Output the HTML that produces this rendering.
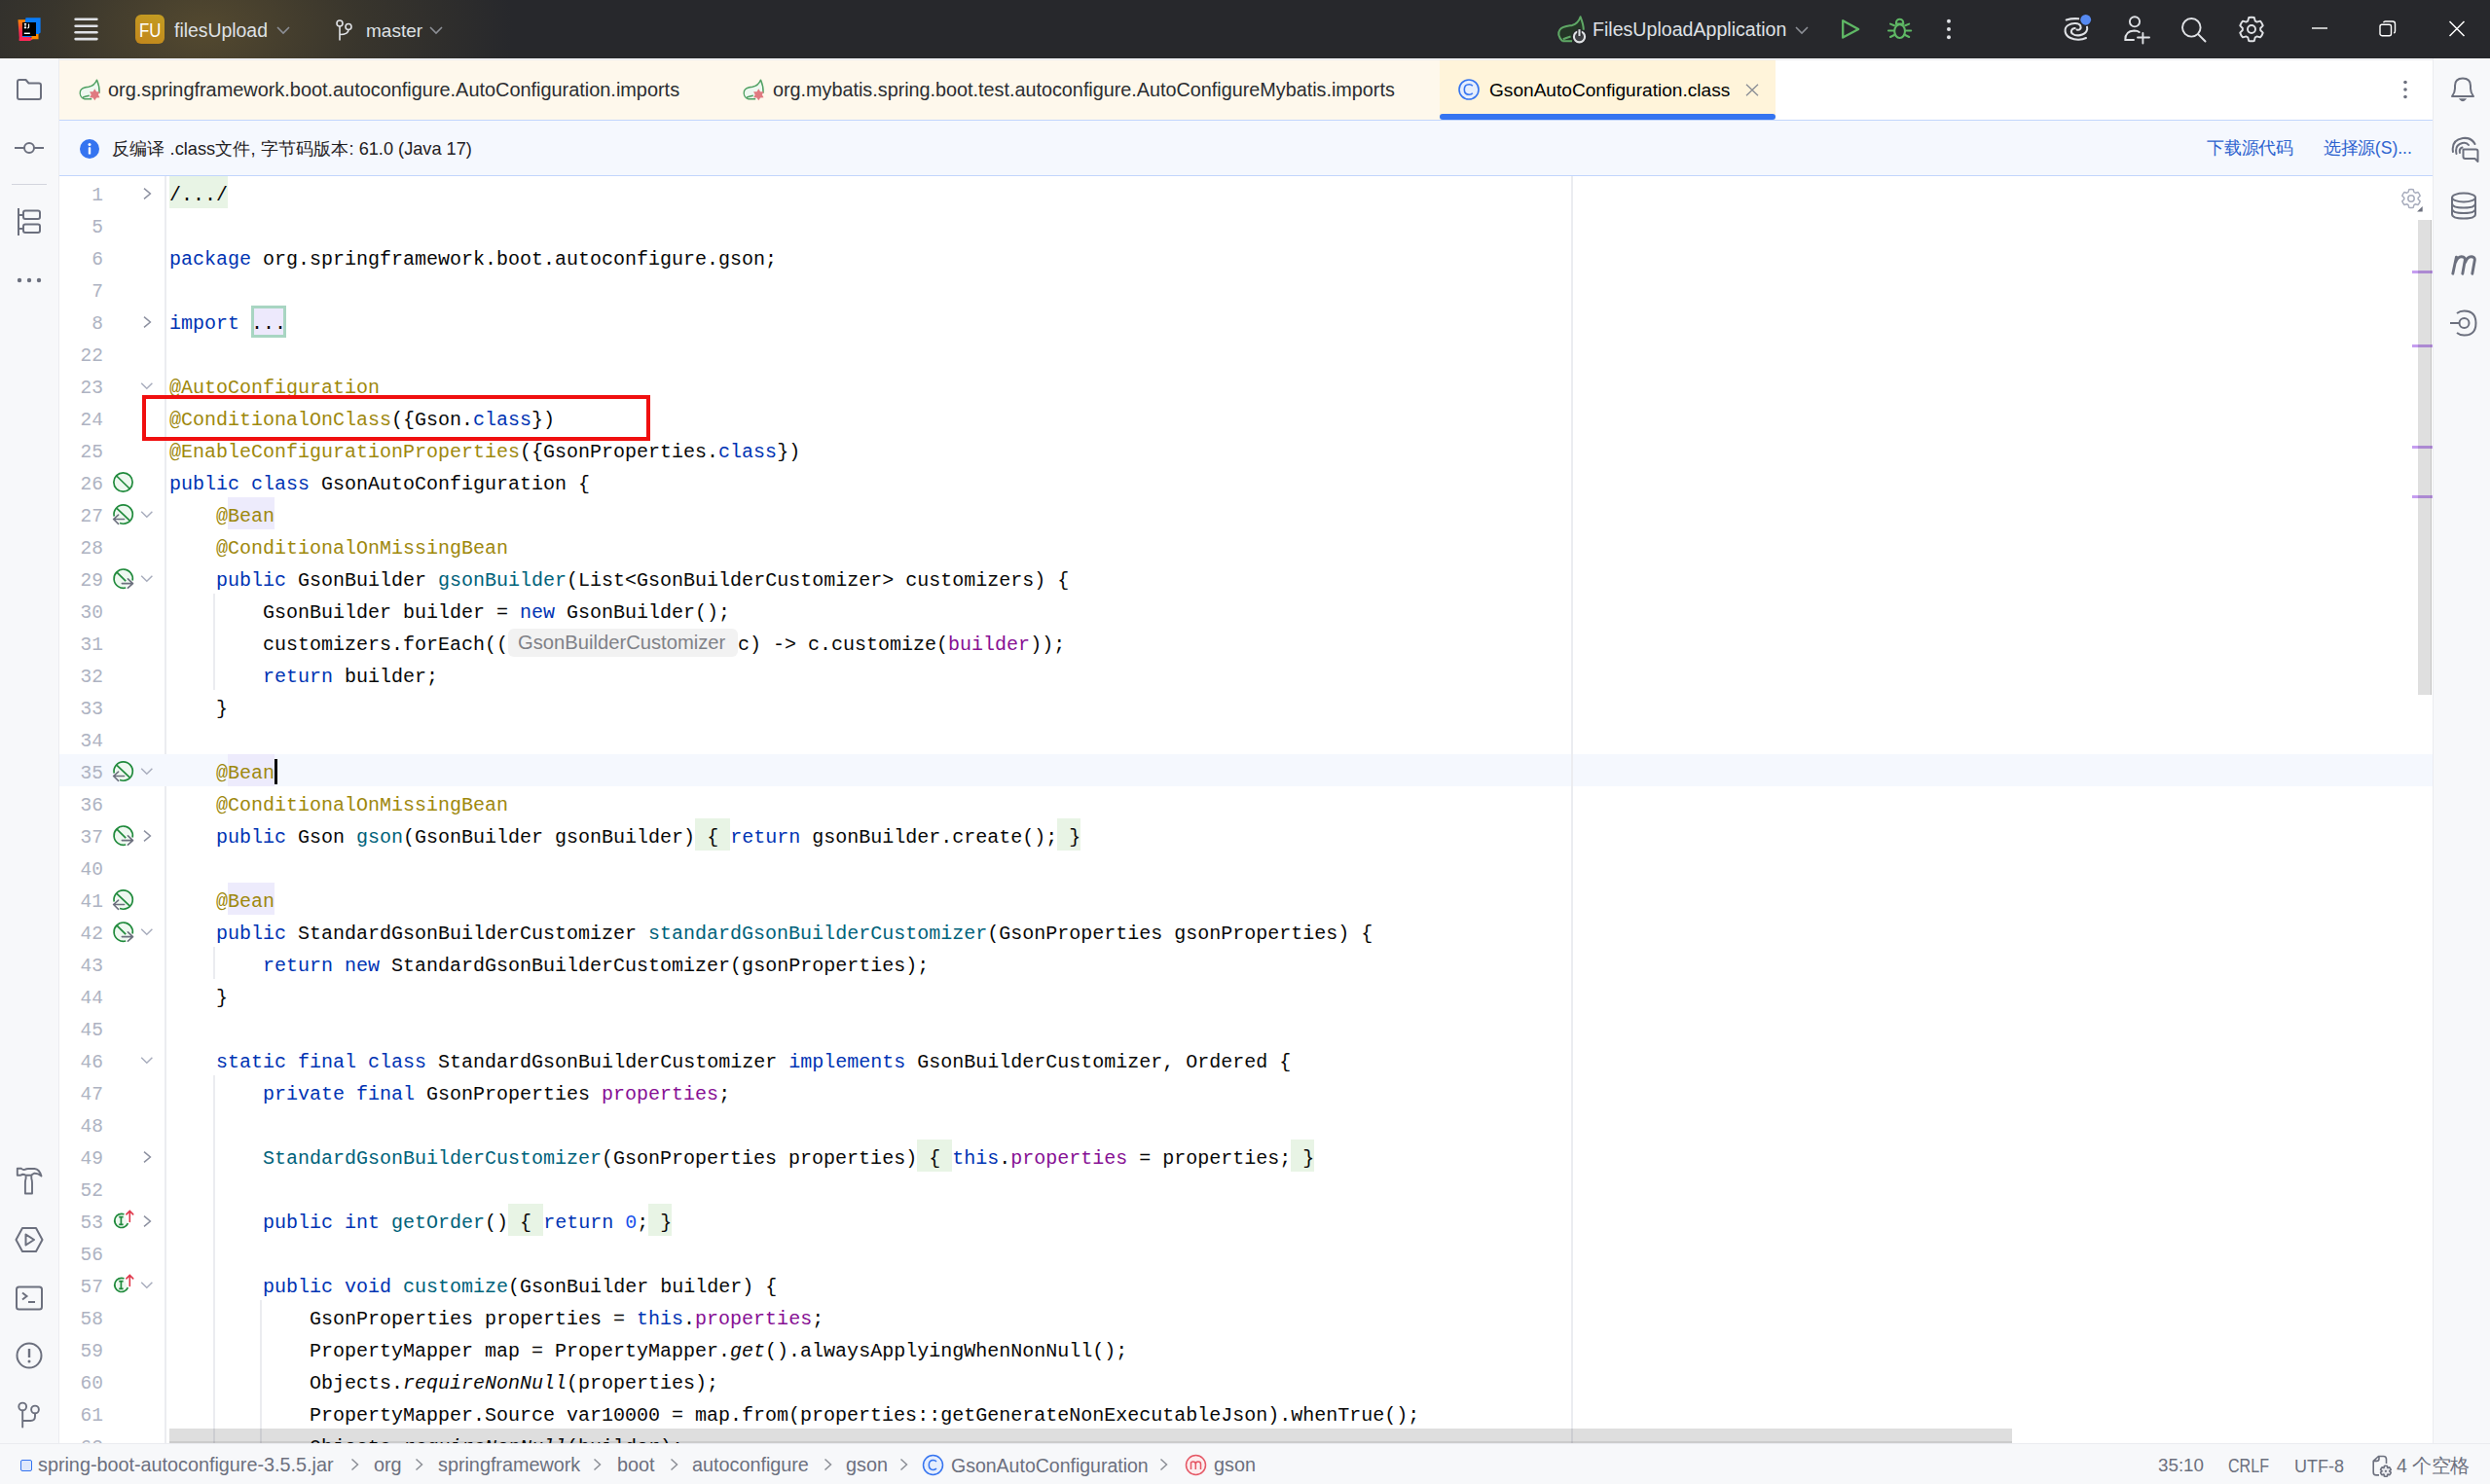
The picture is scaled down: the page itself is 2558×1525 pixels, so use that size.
<!DOCTYPE html>
<html><head><meta charset="utf-8"><style>
*{margin:0;padding:0;box-sizing:border-box}
html,body{width:2558px;height:1525px;overflow:hidden;background:#fff;font-family:"Liberation Sans",sans-serif}
.abs{position:absolute}
#title{position:absolute;left:0;top:0;width:2558px;height:60px;background:#27282c;overflow:hidden}
#title .glow{position:absolute;left:-110px;top:-170px;width:640px;height:400px;background:radial-gradient(ellipse at center, rgba(120,100,50,0.55) 0%, rgba(90,78,45,0.35) 35%, rgba(39,40,44,0) 70%)}
#ltb{position:absolute;left:0;top:60px;width:61px;height:1424px;background:#f7f8fa;border-right:1px solid #ebecf0}
#rtb{position:absolute;left:2499px;top:60px;width:59px;height:1424px;background:#f7f8fa;border-left:1px solid #ebecf0}
#tabs{position:absolute;left:61px;top:60px;width:2438px;height:63px;background:#fff}
#tabs .cream{position:absolute;left:0;top:0;width:1418px;height:63px;background:#fef8ec}
#tabs .act{position:absolute;left:1418px;top:0;width:345px;height:63px;background:#fff4da}
#tabs .ul{position:absolute;left:1418px;top:57px;width:345px;height:6px;background:#3574f0;border-radius:3px}
.tab{position:absolute;top:0;height:63px;line-height:63px;font-size:20px;color:#1f1f1f;white-space:nowrap}
#banner{position:absolute;left:61px;top:123px;width:2438px;height:58px;background:#f5f8fe;border-top:1px solid #c2d6fc;border-bottom:1px solid #c2d6fc}
#status{position:absolute;left:0;top:1483px;width:2558px;height:42px;background:#f7f8fa;border-top:1px solid #ebecf0;font-size:20px;color:#6c707e}
.row{position:absolute;left:61px;width:2438px;height:33px}
.row.cur{background:#f5f8fe}
.ln{position:absolute;left:0;width:45px;text-align:right;font-family:"Liberation Mono",monospace;font-size:19.5px;line-height:33px;color:#aeb3c2;top:4px}
.gi{position:absolute;left:54px;top:5px;width:24px;height:24px}
.gi svg{display:block}
.fm{position:absolute;left:83px;top:10px;width:14px;height:14px;overflow:visible}
.fm svg{overflow:visible}
.fm svg{display:block}
.code{position:absolute;left:113px;top:3px;font-family:"Liberation Mono",monospace;font-size:20px;line-height:33px;white-space:pre;color:#080808}
.k{color:#0033b3}.a{color:#9e880d}.m{color:#00627a}.f{color:#871094}.n{color:#1750eb}.t{color:#080808}
.i{font-style:italic}
.hl{background:#edebfc;display:inline-block;line-height:33px;height:33px;vertical-align:top;margin-top:-3px;padding-top:3px}
.fold{background:#e8f4e5;display:inline-block;height:33px;vertical-align:top;margin-top:-3px;padding-top:3px}
.ibox{display:inline-block;vertical-align:top;margin-top:-2px;height:33px;padding-top:2px;background:#ede9fc;box-shadow:inset 0 0 0 3px #a8d5c2}
.hint{display:inline-block;vertical-align:top;font-family:"Liberation Sans",sans-serif;font-size:20.2px;color:#7f8187;background:#f2f2f2;border-radius:6px;width:236px;height:29px;line-height:29px;margin-top:0px;padding-left:10px;margin-right:0}
.caret{display:inline-block;width:3px;height:26px;background:#000;vertical-align:top;margin-top:2px;margin-right:-3px}
.guide{position:absolute;width:2px;background:#ebecf0}
.t1{position:absolute;line-height:1;white-space:nowrap}
.ic{position:absolute;display:block;overflow:visible}
</style></head><body>

<div id="title"><div class="glow"></div>
<svg class="ic" style="left:18px;top:18px" width="24" height="24" viewBox="0 0 24 24">
<defs><linearGradient id="ijg1" x1="0" y1="0" x2="0" y2="1"><stop offset="0" stop-color="#ff8a00"/><stop offset="0.6" stop-color="#fe2857"/></linearGradient></defs>
<path d="M0.5 2.2H8L9 24H2Z" fill="url(#ijg1)"/>
<path d="M1.5 23.5L3 14L16 22L13 24H2Z" fill="#fe2857"/>
<path d="M8.5 0.2H23.6V15.5L18 20H4.8Z" fill="#087cfa"/>
<path d="M15 17H21.5V22.3H14Z" fill="#ff8a00"/>
<rect x="5" y="5" width="14" height="14" fill="#000"/>
<path d="M6.8 6.6H9.2M8 6.6V10.6M6.8 10.6H9.2M11.6 6.6V10.3Q11.6 10.9 10.2 10.9" stroke="#fff" stroke-width="1.1" fill="none"/>
<rect x="6.8" y="15.6" width="6" height="1.4" fill="#fff"/>
</svg>
<svg class="ic" style="left:76px;top:18px" width="25" height="24" viewBox="0 0 25 24"><rect x="0.3" y="0.5" width="24.4" height="2.6" rx="1.3" fill="#dfe1e5"/><rect x="0.3" y="7.4" width="24.4" height="2.6" rx="1.3" fill="#dfe1e5"/><rect x="0.3" y="14.0" width="24.4" height="2.6" rx="1.3" fill="#dfe1e5"/><rect x="0.3" y="20.8" width="24.4" height="2.6" rx="1.3" fill="#dfe1e5"/></svg>
<div class="abs" style="left:139px;top:15px;width:30px;height:30px;border-radius:6px;background:linear-gradient(200deg,#c39d23,#c2861b);"></div>
<div class="t1" style="left:143px;top:21.5px;font-size:19.5px;color:#ffffff;transform:scaleX(0.86);transform-origin:0 0">FU</div>
<div class="t1" style="left:179px;top:21.6px;font-size:19.4px;color:#dfe1e5;">filesUpload</div>
<svg class="ic" style="left:284px;top:27px" width="14" height="8" viewBox="0 0 14 8"><path d="M1 1L7 7L13 1" fill="none" stroke="#8c8f96" stroke-width="1.6"/></svg>
<svg class="ic" style="left:344px;top:20px" width="20" height="22" viewBox="0 0 20 22"><circle cx="5" cy="4" r="3" fill="none" stroke="#dfe1e5" stroke-width="1.6"/><circle cx="14" cy="7.5" r="3" fill="none" stroke="#dfe1e5" stroke-width="1.6"/><path d="M5 7V21.5M14 10.5Q14 15.5 5 15.5" fill="none" stroke="#dfe1e5" stroke-width="1.6"/></svg>
<div class="t1" style="left:376px;top:21.9px;font-size:19.0px;color:#dfe1e5;">master</div>
<svg class="ic" style="left:441px;top:27px" width="14" height="8" viewBox="0 0 14 8"><path d="M1 1L7 7L13 1" fill="none" stroke="#8c8f96" stroke-width="1.6"/></svg>
<svg class="ic" style="left:1595px;top:10px" width="40" height="40" viewBox="0 0 40 40"><path d="M10.2 32.3C6.5 28.5 5 24 7.5 20.5C10 17 15 16.8 20 16C24 15 27 12 28.6 7.3C30.5 12 31.8 17 31.8 21.5L24 32.3Z" fill="#243526" stroke="none"/>
<path d="M10.2 32.3C6.5 28.5 5 24 7.5 20.5C10 17 15 16.8 20 16C24 15 27 12 28.6 7.3C30.5 12 31.8 17 31.8 20.8M10.2 32.3H20M10.8 30.2Q15 28.5 18.6 27.5" fill="none" stroke="#5fa866" stroke-width="2" stroke-linejoin="round"/>
<circle cx="27.5" cy="27.8" r="7.6" fill="#27282c"/>
<circle cx="27.5" cy="27.8" r="5.6" fill="#404145" stroke="#dfe1e5" stroke-width="2.1"/><path d="M27.5 19V27" stroke="#27282c" stroke-width="4.5"/><path d="M27.5 20.2V27" stroke="#dfe1e5" stroke-width="2.1"/></svg>
<div class="t1" style="left:1636px;top:21.4px;font-size:19.6px;color:#dfe1e5;">FilesUploadApplication</div>
<svg class="ic" style="left:1844px;top:27px" width="14" height="8" viewBox="0 0 14 8"><path d="M1 1L7 7L13 1" fill="none" stroke="#8c8f96" stroke-width="1.6"/></svg>
<svg class="ic" style="left:1885px;top:12px" width="30" height="36" viewBox="0 0 30 36"><path d="M8.2 9.2L24.2 17.9L8.2 26.6Z" fill="none" stroke="#5fb865" stroke-width="2.3" stroke-linejoin="round"/></svg>
<svg class="ic" style="left:1885px;top:12px" width="85" height="36" viewBox="0 0 85 36"><path d="M63 12.6V11.3A3.6 3.6 0 0 1 70.2 11.3V12.6Z" fill="none" stroke="#5fb865" stroke-width="2.1"/>
<ellipse cx="66.6" cy="20.1" rx="5.4" ry="6.9" fill="none" stroke="#5fb865" stroke-width="2.1"/>
<path d="M57 12.6L61 14.2M55 19.5H60.5M57 26L61 24M76.2 12.6L72.2 14.2M78.2 19.5H72.7M76.2 26L72.2 24" stroke="#5fb865" stroke-width="2.1" stroke-linecap="round"/></svg>
<svg class="ic" style="left:1998px;top:19px" width="8" height="22" viewBox="0 0 8 22"><circle cx="4" cy="2.8" r="2" fill="#dfe1e5"/><circle cx="4" cy="11" r="2" fill="#dfe1e5"/><circle cx="4" cy="19.2" r="2" fill="#dfe1e5"/></svg>
<svg class="ic" style="left:2115px;top:10px" width="40" height="38" viewBox="0 0 40 38"><path d="M7.7 10.5Q14 8.6 20.5 9.3M18.5 20.5C21 21.5 23.5 19.5 22.3 16.5C21 13.5 14 13 9.5 16C5 19 5.5 26 12 29C17 31.5 24 31 28 29M16.7 19C13 19 11.5 23 14.5 25C18 27.5 26 26.5 28.5 22C29.3 20.5 29.3 18.5 29 17.4" fill="none" stroke="#dfe1e5" stroke-width="2.05" stroke-linecap="round"/>
<circle cx="27.7" cy="10.3" r="6.6" fill="#27282c"/><circle cx="27.7" cy="10.3" r="5.4" fill="#568af2"/></svg>
<svg class="ic" style="left:2175px;top:10px" width="40" height="40" viewBox="0 0 40 40"><circle cx="18" cy="12.3" r="5.1" fill="none" stroke="#dfe1e5" stroke-width="1.9"/><path d="M17 31H8.3Q8 22 17.5 21.5Q21 21.5 22.7 23M26.4 24V34.5M21 28.5H33" fill="none" stroke="#dfe1e5" stroke-width="1.9" stroke-linecap="round"/></svg>
<svg class="ic" style="left:2235px;top:10px" width="40" height="40" viewBox="0 0 40 40"><circle cx="16.3" cy="18.3" r="9.3" fill="none" stroke="#dfe1e5" stroke-width="1.9"/><path d="M23.4 25.4L30.5 32.5" stroke="#dfe1e5" stroke-width="2" stroke-linecap="round"/></svg>
<svg class="ic" style="left:2293px;top:10px" width="40" height="40" viewBox="0 0 40 40"><path d="M16.26 11.60 L17.23 8.02 A12.3 12.3 0 0 1 22.77 8.02 L23.74 11.60 A9.2 9.2 0 0 1 25.41 12.56 L25.41 12.56 L29.00 11.61 A12.3 12.3 0 0 1 31.76 16.40 L29.15 19.04 A9.2 9.2 0 0 1 29.15 20.96 L29.15 20.96 L31.76 23.60 A12.3 12.3 0 0 1 29.00 28.39 L25.41 27.44 A9.2 9.2 0 0 1 23.74 28.40 L23.74 28.40 L22.77 31.98 A12.3 12.3 0 0 1 17.23 31.98 L16.26 28.40 A9.2 9.2 0 0 1 14.59 27.44 L14.59 27.44 L11.00 28.39 A12.3 12.3 0 0 1 8.24 23.60 L10.85 20.96 A9.2 9.2 0 0 1 10.85 19.04 L10.85 19.04 L8.24 16.40 A12.3 12.3 0 0 1 11.00 11.61 L14.59 12.56 A9.2 9.2 0 0 1 16.26 11.60 Z" fill="none" stroke="#dfe1e5" stroke-width="1.9" stroke-linejoin="round"/><circle cx="20" cy="20" r="4" fill="none" stroke="#dfe1e5" stroke-width="1.9"/></svg>
<svg class="ic" style="left:2375px;top:28px" width="17" height="3" viewBox="0 0 17 3"><rect x="0" y="0.3" width="16" height="1.4" fill="#fff"/></svg>
<svg class="ic" style="left:2444px;top:21px" width="18" height="17" viewBox="0 0 18 17"><rect x="1" y="4.2" width="11.5" height="11.5" rx="2" fill="none" stroke="#fff" stroke-width="1.4"/><path d="M4.5 2.2Q5 1 6.5 1H14Q16.5 1 16.5 3.5V11Q16.5 12.5 15.2 13" fill="none" stroke="#fff" stroke-width="1.4"/></svg>
<svg class="ic" style="left:2515px;top:21px" width="18" height="17" viewBox="0 0 18 17"><path d="M1.5 1L16.5 16M16.5 1L1.5 16" stroke="#fff" stroke-width="1.5"/></svg>
</div>
<div id="tabs"><div class="cream"></div><div class="act"></div><div class="ul"></div><div class="abs" style="left:0;top:0;width:2438px;height:1px;background:#f7f8fa"></div><div class="abs" style="left:0;top:1px;width:2438px;height:1px;background:#ebecf0"></div></div>
<svg class="ic" style="left:70px;top:70px" width="40" height="40" viewBox="0 0 40 40"><path d="M16.7 31.8C13 30.5 11.5 27 12.5 23.5C13.5 20.5 17 19.5 21 19.2C25 18.8 28 16 29.5 12.1C31.5 16.5 32.3 21 32.1 25.8L24.2 31.8Z" fill="#eef8f0" stroke="none"/>
<path d="M16.7 31.8C13 30.5 11.5 27 12.5 23.5C13.5 20.5 17 19.5 21 19.2C25 18.8 28 16 29.5 12.1C31.5 16.5 32.3 21 32.1 25.8M16.7 31.8H24.2M15.2 30Q18.5 28.8 21.8 28.2" fill="none" stroke="#4fa062" stroke-width="1.4" stroke-linejoin="round"/>
<path d="M27.30 21.30 L29.10 24.18 L32.50 24.30 L30.90 27.30 L32.50 30.30 L29.10 30.42 L27.30 33.30 L25.50 30.42 L22.10 30.30 L23.70 27.30 L22.10 24.30 L25.50 24.18Z" fill="#e07a80"/></svg>
<div class="t1" style="left:111px;top:83.2px;font-size:19.9px;color:#2b2d30;">org.springframework.boot.autoconfigure.AutoConfiguration.imports</div>
<svg class="ic" style="left:752px;top:70px" width="40" height="40" viewBox="0 0 40 40"><path d="M16.7 31.8C13 30.5 11.5 27 12.5 23.5C13.5 20.5 17 19.5 21 19.2C25 18.8 28 16 29.5 12.1C31.5 16.5 32.3 21 32.1 25.8L24.2 31.8Z" fill="#eef8f0" stroke="none"/>
<path d="M16.7 31.8C13 30.5 11.5 27 12.5 23.5C13.5 20.5 17 19.5 21 19.2C25 18.8 28 16 29.5 12.1C31.5 16.5 32.3 21 32.1 25.8M16.7 31.8H24.2M15.2 30Q18.5 28.8 21.8 28.2" fill="none" stroke="#4fa062" stroke-width="1.4" stroke-linejoin="round"/>
<path d="M27.30 21.30 L29.10 24.18 L32.50 24.30 L30.90 27.30 L32.50 30.30 L29.10 30.42 L27.30 33.30 L25.50 30.42 L22.10 30.30 L23.70 27.30 L22.10 24.30 L25.50 24.18Z" fill="#e07a80"/></svg>
<div class="t1" style="left:794px;top:83.2px;font-size:19.8px;color:#2b2d30;">org.mybatis.spring.boot.test.autoconfigure.AutoConfigureMybatis.imports</div>
<svg class="ic" style="left:1497px;top:80px" width="24" height="24" viewBox="0 0 24 24"><circle cx="12" cy="12" r="10" fill="#e6eefd" stroke="#3574f0" stroke-width="1.6"/><path d="M15.8 8.3Q14.5 6.8 12.3 6.8Q7.3 6.8 7.3 12Q7.3 17.2 12.3 17.2Q14.5 17.2 15.8 15.7" fill="none" stroke="#3574f0" stroke-width="1.6"/></svg>
<div class="t1" style="left:1530px;top:82.8px;font-size:19.1px;color:#000000;">GsonAutoConfiguration.class</div>
<svg class="ic" style="left:1793px;top:86px" width="14" height="13" viewBox="0 0 14 13"><path d="M1 0.8L13 12.2M13 0.8L1 12.2" stroke="#8c8f96" stroke-width="1.4"/></svg>
<svg class="ic" style="left:2467px;top:82px" width="8" height="20" viewBox="0 0 8 20"><circle cx="4" cy="2.5" r="1.8" fill="#6c707e"/><circle cx="4" cy="10" r="1.8" fill="#6c707e"/><circle cx="4" cy="17.5" r="1.8" fill="#6c707e"/></svg>
<div id="banner"></div>
<svg class="ic" style="left:81px;top:142px" width="22" height="22" viewBox="0 0 22 22"><circle cx="11" cy="11" r="10" fill="#3574f0"/><circle cx="11" cy="6.5" r="1.5" fill="#fff"/><rect x="9.8" y="9.3" width="2.4" height="7.2" rx="0.6" fill="#fff"/></svg>
<div class="t1" style="left:115px;top:143.6px;font-size:18.2px;color:#1f2023;"><span style="display:inline-block;width:18.2px;text-align:center">反</span><span style="display:inline-block;width:18.2px;text-align:center">编</span><span style="display:inline-block;width:18.2px;text-align:center">译</span> .class<span style="display:inline-block;width:18.2px;text-align:center">文</span><span style="display:inline-block;width:18.2px;text-align:center">件</span>, <span style="display:inline-block;width:18.2px;text-align:center">字</span><span style="display:inline-block;width:18.2px;text-align:center">节</span><span style="display:inline-block;width:18.2px;text-align:center">码</span><span style="display:inline-block;width:18.2px;text-align:center">版</span><span style="display:inline-block;width:18.2px;text-align:center">本</span>: 61.0 (Java 17)</div>
<div class="t1" style="left:2267px;top:143.9px;font-size:17.8px;color:#2e63cf;"><span style="display:inline-block;width:17.8px;text-align:center">下</span><span style="display:inline-block;width:17.8px;text-align:center">载</span><span style="display:inline-block;width:17.8px;text-align:center">源</span><span style="display:inline-block;width:17.8px;text-align:center">代</span><span style="display:inline-block;width:17.8px;text-align:center">码</span></div>
<div class="t1" style="left:2387px;top:144.1px;font-size:17.6px;color:#2e63cf;"><span style="display:inline-block;width:17.6px;text-align:center">选</span><span style="display:inline-block;width:17.6px;text-align:center">择</span><span style="display:inline-block;width:17.6px;text-align:center">源</span>(S)...</div>
<div id="ltb"></div>
<svg class="ic" style="left:16px;top:80px" width="28" height="24" viewBox="0 0 28 24"><path d="M2 4Q2 2 4 2H10.5L13.5 5.5H24Q26 5.5 26 7.5V20Q26 22 24 22H4Q2 22 2 20Z" fill="none" stroke="#6c707e" stroke-width="2" stroke-linejoin="round"/></svg>
<svg class="ic" style="left:14px;top:142px" width="32" height="20" viewBox="0 0 32 20"><circle cx="16" cy="10" r="5" fill="none" stroke="#6c707e" stroke-width="2"/><path d="M1 10H11M21 10H31" stroke="#6c707e" stroke-width="2"/></svg>
<div class="abs" style="left:12px;top:189px;width:36px;height:1px;background:#d3d5dd"></div>
<svg class="ic" style="left:17px;top:213px" width="26" height="30" viewBox="0 0 26 30"><path d="M2 1V29M2 8H6M2 22H6" fill="none" stroke="#6c707e" stroke-width="2"/><rect x="7" y="3.5" width="17" height="8.5" rx="2" fill="none" stroke="#6c707e" stroke-width="2"/><rect x="7" y="17.5" width="17" height="8.5" rx="2" fill="none" stroke="#6c707e" stroke-width="2"/></svg>
<svg class="ic" style="left:16px;top:283px" width="28" height="10" viewBox="0 0 28 10"><circle cx="4" cy="5" r="2.2" fill="#6c707e"/><circle cx="14" cy="5" r="2.2" fill="#6c707e"/><circle cx="24" cy="5" r="2.2" fill="#6c707e"/></svg>
<svg class="ic" style="left:10px;top:1190px" width="40" height="45" viewBox="0 0 40 45"><path d="M7.8 10.8H12Q13.5 12.3 15.5 11.8Q17 11 19 11H25.5Q30.5 11.5 32.5 18.5Q29 15.5 25 15.8Q23 16.5 22.3 17.8H16.5Q15 16.8 13 16.8Q11.8 17.8 10.5 17.8H7.8Z" fill="none" stroke="#6c707e" stroke-width="1.9" stroke-linejoin="round"/><path d="M16.6 18.2V21Q15.9 23 15.9 25.5V36.5H23V25.5Q23 23 22.3 21V18.2" fill="none" stroke="#6c707e" stroke-width="1.9" stroke-linejoin="round"/></svg>
<svg class="ic" style="left:15px;top:1260px" width="30" height="28" viewBox="0 0 30 28"><path d="M8 2H22L28.5 14L22 26H8L1.5 14Z" fill="none" stroke="#6c707e" stroke-width="2" stroke-linejoin="round"/><path d="M11.5 8.5L20 14L11.5 19.5Z" fill="none" stroke="#6c707e" stroke-width="2" stroke-linejoin="round"/></svg>
<svg class="ic" style="left:16px;top:1321px" width="28" height="26" viewBox="0 0 28 26"><rect x="1" y="1.5" width="26" height="23" rx="2.5" fill="none" stroke="#6c707e" stroke-width="2"/><path d="M7 7.5L11.5 11L7 14.5M13 17H20" fill="none" stroke="#6c707e" stroke-width="2"/></svg>
<svg class="ic" style="left:16px;top:1379px" width="28" height="28" viewBox="0 0 28 28"><circle cx="14" cy="14" r="12.5" fill="none" stroke="#6c707e" stroke-width="2"/><path d="M14 7V16" stroke="#6c707e" stroke-width="2.4"/><circle cx="14" cy="20" r="1.5" fill="#6c707e"/></svg>
<svg class="ic" style="left:10px;top:1435px" width="40" height="40" viewBox="0 0 40 40"><circle cx="13.2" cy="10.5" r="3.9" fill="none" stroke="#6c707e" stroke-width="1.9"/><circle cx="26" cy="13.5" r="3.9" fill="none" stroke="#6c707e" stroke-width="1.9"/><path d="M13.2 14.4V31.5M26 17.4V20.5Q26 25 21.5 25H13.2" fill="none" stroke="#6c707e" stroke-width="1.9" stroke-linecap="round"/></svg>
<div id="rtb"></div>
<svg class="ic" style="left:2516px;top:77px" width="28" height="30" viewBox="0 0 28 30"><path d="M3 22Q6 18 6 14V11Q6 3.5 14 3.5Q22 3.5 22 11V14Q22 18 25 22Z" fill="none" stroke="#6c707e" stroke-width="2" stroke-linejoin="round"/><path d="M11.5 25Q14 28 16.5 25Z" fill="#6c707e" stroke="#6c707e" stroke-width="1.5"/></svg>
<svg class="ic" style="left:2517px;top:139px" width="30" height="30" viewBox="0 0 30 30"><path d="M3 17Q1 5 13 3Q22 2 25.5 9M6.5 19Q4.5 10 12.5 8Q17 7 19 10M10 18Q9 13.5 12.5 12.5" fill="none" stroke="#6c707e" stroke-width="2" stroke-linecap="round"/><path d="M13.5 14.5H26.5Q28.5 14.5 28.5 16.5V27L25.5 24H15.5Q13.5 24 13.5 22Z" fill="#f7f8fa" stroke="#6c707e" stroke-width="2" stroke-linejoin="round"/></svg>
<svg class="ic" style="left:2517px;top:197px" width="28" height="30" viewBox="0 0 28 30"><ellipse cx="14" cy="6" rx="12" ry="4.5" fill="none" stroke="#6c707e" stroke-width="2"/><path d="M2 6V23Q2 27.5 14 27.5Q26 27.5 26 23V6M2 12Q2 16.5 14 16.5Q26 16.5 26 12M2 17.5Q2 22 14 22Q26 22 26 17.5" fill="none" stroke="#6c707e" stroke-width="2"/></svg>
<svg class="ic" style="left:2512px;top:258px" width="36" height="28" viewBox="0 0 36 28"><path d="M7.8 23.2L11.4 6.2M10.6 11.5Q12.5 5.8 16.8 5.8Q21 5.8 20.2 10L17.8 23.2M20.6 11.5Q22.5 5.8 26.8 5.8Q31 5.8 30.2 10L27.8 23.2" fill="none" stroke="#6c707e" stroke-width="2.9" stroke-linecap="round" stroke-linejoin="round"/></svg>
<svg class="ic" style="left:2516px;top:317px" width="30" height="30" viewBox="0 0 30 30"><path d="M8 5Q11 2.5 15.5 2.5Q27.5 2.5 27.5 15Q27.5 27.5 15.5 27.5Q11 27.5 8 25" fill="none" stroke="#6c707e" stroke-width="2"/><circle cx="15.5" cy="15" r="5" fill="none" stroke="#6c707e" stroke-width="2"/><path d="M1 15H10.5" stroke="#6c707e" stroke-width="2"/></svg>
<div class="abs" style="left:169px;top:181px;width:2px;height:1302px;background:#ebecf0"></div>
<div class="row" style="top:181px"><div class="ln">1</div><div class="fm"><svg width="14" height="14" viewBox="0 0 14 14"><path d="M4 2.6L10.4 8L4 13.4" fill="none" stroke="#8c90a0" stroke-width="1.5"/></svg></div><div class="code"><span class="fold">/.../</span></div></div>
<div class="row" style="top:214px"><div class="ln">5</div><div class="code"></div></div>
<div class="row" style="top:247px"><div class="ln">6</div><div class="code"><span class="k">package</span><span class="t"> org.springframework.boot.autoconfigure.gson;</span></div></div>
<div class="row" style="top:280px"><div class="ln">7</div><div class="code"></div></div>
<div class="row" style="top:313px"><div class="ln">8</div><div class="fm"><svg width="14" height="14" viewBox="0 0 14 14"><path d="M4 2.6L10.4 8L4 13.4" fill="none" stroke="#8c90a0" stroke-width="1.5"/></svg></div><div class="code"><span class="k">import</span><span class="t"> </span><span class="ibox">...</span></div></div>
<div class="row" style="top:346px"><div class="ln">22</div><div class="code"></div></div>
<div class="row" style="top:379px"><div class="ln">23</div><div class="fm"><svg width="14" height="14" viewBox="0 0 14 14"><path d="M1.2 4.8L6.8 10.2L12.4 4.8" fill="none" stroke="#a8adbd" stroke-width="1.5"/></svg></div><div class="code"><span class="a">@AutoConfiguration</span></div></div>
<div class="row" style="top:412px"><div class="ln">24</div><div class="code"><span class="a">@ConditionalOnClass</span><span class="t">({Gson.</span><span class="k">class</span><span class="t">})</span></div></div>
<div class="row" style="top:445px"><div class="ln">25</div><div class="code"><span class="a">@EnableConfigurationProperties</span><span class="t">({GsonProperties.</span><span class="k">class</span><span class="t">})</span></div></div>
<div class="row" style="top:478px"><div class="ln">26</div><div class="gi" style=""><svg width="24" height="24" viewBox="0 0 24 24"><circle cx="11.5" cy="12.5" r="9.65" fill="#eef8f0" stroke="#208a3c" stroke-width="1.7"/><path d="M4.7 6L18 19" stroke="#208a3c" stroke-width="1.7"/></svg></div><div class="code"><span class="k">public</span><span class="t"> </span><span class="k">class</span><span class="t"> GsonAutoConfiguration {</span></div></div>
<div class="row" style="top:511px"><div class="ln">27</div><div class="gi" style=""><svg width="24" height="24" viewBox="0 0 24 24" style="overflow:visible"><path d="M2.2 14.5A9.65 9.65 0 1 1 8 21.5" fill="#eef8f0" stroke="#208a3c" stroke-width="1.7"/><path d="M5 6.3L18.2 18.9" stroke="#208a3c" stroke-width="1.7"/><path d="M12.6 17.5H1.6M6.6 13.1L1.6 17.5L6.6 22.3" fill="none" stroke="#6c707e" stroke-width="1.6" stroke-linecap="round" stroke-linejoin="round"/></svg></div><div class="fm"><svg width="14" height="14" viewBox="0 0 14 14"><path d="M1.2 4.8L6.8 10.2L12.4 4.8" fill="none" stroke="#a8adbd" stroke-width="1.5"/></svg></div><div class="code"><span class="t">    </span><span class="a">@</span><span class="a hl">Bean</span></div></div>
<div class="row" style="top:544px"><div class="ln">28</div><div class="code"><span class="t">    </span><span class="a">@ConditionalOnMissingBean</span></div></div>
<div class="row" style="top:577px"><div class="ln">29</div><div class="gi" style=""><svg width="24" height="24" viewBox="0 0 24 24" style="overflow:visible"><path d="M14.2 22A9.65 9.65 0 1 1 21.2 14.5" fill="#eef8f0" stroke="#208a3c" stroke-width="1.7"/><path d="M4.8 5.8L14.2 15.2" stroke="#208a3c" stroke-width="1.7"/><path d="M10.3 17.6H21.5M16.4 12.8L21.5 17.6L16.4 22.2" fill="none" stroke="#6c707e" stroke-width="1.6" stroke-linecap="round" stroke-linejoin="round"/></svg></div><div class="fm"><svg width="14" height="14" viewBox="0 0 14 14"><path d="M1.2 4.8L6.8 10.2L12.4 4.8" fill="none" stroke="#a8adbd" stroke-width="1.5"/></svg></div><div class="code"><span class="t">    </span><span class="k">public</span><span class="t"> GsonBuilder </span><span class="m">gsonBuilder</span><span class="t">(List&lt;GsonBuilderCustomizer&gt; customizers) {</span></div></div>
<div class="row" style="top:610px"><div class="ln">30</div><div class="code"><span class="t">        GsonBuilder builder = </span><span class="k">new</span><span class="t"> GsonBuilder();</span></div></div>
<div class="row" style="top:643px"><div class="ln">31</div><div class="code"><span class="t">        customizers.forEach((</span><span class="hint">GsonBuilderCustomizer</span><span class="t">c) -&gt; c.customize(</span><span class="f">builder</span><span class="t">));</span></div></div>
<div class="row" style="top:676px"><div class="ln">32</div><div class="code"><span class="t">        </span><span class="k">return</span><span class="t"> builder;</span></div></div>
<div class="row" style="top:709px"><div class="ln">33</div><div class="code"><span class="t">    }</span></div></div>
<div class="row" style="top:742px"><div class="ln">34</div><div class="code"></div></div>
<div class="row cur" style="top:775px"><div class="ln">35</div><div class="gi" style=""><svg width="24" height="24" viewBox="0 0 24 24" style="overflow:visible"><path d="M2.2 14.5A9.65 9.65 0 1 1 8 21.5" fill="#eef8f0" stroke="#208a3c" stroke-width="1.7"/><path d="M5 6.3L18.2 18.9" stroke="#208a3c" stroke-width="1.7"/><path d="M12.6 17.5H1.6M6.6 13.1L1.6 17.5L6.6 22.3" fill="none" stroke="#6c707e" stroke-width="1.6" stroke-linecap="round" stroke-linejoin="round"/></svg></div><div class="fm"><svg width="14" height="14" viewBox="0 0 14 14"><path d="M1.2 4.8L6.8 10.2L12.4 4.8" fill="none" stroke="#a8adbd" stroke-width="1.5"/></svg></div><div class="code"><span class="t">    </span><span class="a">@</span><span class="a hl">Bean</span><span class="caret"></span></div></div>
<div class="row" style="top:808px"><div class="ln">36</div><div class="code"><span class="t">    </span><span class="a">@ConditionalOnMissingBean</span></div></div>
<div class="row" style="top:841px"><div class="ln">37</div><div class="gi" style=""><svg width="24" height="24" viewBox="0 0 24 24" style="overflow:visible"><path d="M14.2 22A9.65 9.65 0 1 1 21.2 14.5" fill="#eef8f0" stroke="#208a3c" stroke-width="1.7"/><path d="M4.8 5.8L14.2 15.2" stroke="#208a3c" stroke-width="1.7"/><path d="M10.3 17.6H21.5M16.4 12.8L21.5 17.6L16.4 22.2" fill="none" stroke="#6c707e" stroke-width="1.6" stroke-linecap="round" stroke-linejoin="round"/></svg></div><div class="fm"><svg width="14" height="14" viewBox="0 0 14 14"><path d="M4 2.6L10.4 8L4 13.4" fill="none" stroke="#8c90a0" stroke-width="1.5"/></svg></div><div class="code"><span class="t">    </span><span class="k">public</span><span class="t"> Gson </span><span class="m">gson</span><span class="t">(GsonBuilder gsonBuilder)</span><span class="fold"> { </span><span class="k">return</span><span class="t"> gsonBuilder.create();</span><span class="fold"> }</span></div></div>
<div class="row" style="top:874px"><div class="ln">40</div><div class="code"></div></div>
<div class="row" style="top:907px"><div class="ln">41</div><div class="gi" style=""><svg width="24" height="24" viewBox="0 0 24 24" style="overflow:visible"><path d="M2.2 14.5A9.65 9.65 0 1 1 8 21.5" fill="#eef8f0" stroke="#208a3c" stroke-width="1.7"/><path d="M5 6.3L18.2 18.9" stroke="#208a3c" stroke-width="1.7"/><path d="M12.6 17.5H1.6M6.6 13.1L1.6 17.5L6.6 22.3" fill="none" stroke="#6c707e" stroke-width="1.6" stroke-linecap="round" stroke-linejoin="round"/></svg></div><div class="code"><span class="t">    </span><span class="a">@</span><span class="a hl">Bean</span></div></div>
<div class="row" style="top:940px"><div class="ln">42</div><div class="gi" style=""><svg width="24" height="24" viewBox="0 0 24 24" style="overflow:visible"><path d="M14.2 22A9.65 9.65 0 1 1 21.2 14.5" fill="#eef8f0" stroke="#208a3c" stroke-width="1.7"/><path d="M4.8 5.8L14.2 15.2" stroke="#208a3c" stroke-width="1.7"/><path d="M10.3 17.6H21.5M16.4 12.8L21.5 17.6L16.4 22.2" fill="none" stroke="#6c707e" stroke-width="1.6" stroke-linecap="round" stroke-linejoin="round"/></svg></div><div class="fm"><svg width="14" height="14" viewBox="0 0 14 14"><path d="M1.2 4.8L6.8 10.2L12.4 4.8" fill="none" stroke="#a8adbd" stroke-width="1.5"/></svg></div><div class="code"><span class="t">    </span><span class="k">public</span><span class="t"> StandardGsonBuilderCustomizer </span><span class="m">standardGsonBuilderCustomizer</span><span class="t">(GsonProperties gsonProperties) {</span></div></div>
<div class="row" style="top:973px"><div class="ln">43</div><div class="code"><span class="t">        </span><span class="k">return</span><span class="t"> </span><span class="k">new</span><span class="t"> StandardGsonBuilderCustomizer(gsonProperties);</span></div></div>
<div class="row" style="top:1006px"><div class="ln">44</div><div class="code"><span class="t">    }</span></div></div>
<div class="row" style="top:1039px"><div class="ln">45</div><div class="code"></div></div>
<div class="row" style="top:1072px"><div class="ln">46</div><div class="fm"><svg width="14" height="14" viewBox="0 0 14 14"><path d="M1.2 4.8L6.8 10.2L12.4 4.8" fill="none" stroke="#a8adbd" stroke-width="1.5"/></svg></div><div class="code"><span class="t">    </span><span class="k">static</span><span class="t"> </span><span class="k">final</span><span class="t"> </span><span class="k">class</span><span class="t"> StandardGsonBuilderCustomizer </span><span class="k">implements</span><span class="t"> GsonBuilderCustomizer, Ordered {</span></div></div>
<div class="row" style="top:1105px"><div class="ln">47</div><div class="code"><span class="t">        </span><span class="k">private</span><span class="t"> </span><span class="k">final</span><span class="t"> GsonProperties </span><span class="f">properties</span><span class="t">;</span></div></div>
<div class="row" style="top:1138px"><div class="ln">48</div><div class="code"></div></div>
<div class="row" style="top:1171px"><div class="ln">49</div><div class="fm"><svg width="14" height="14" viewBox="0 0 14 14"><path d="M4 2.6L10.4 8L4 13.4" fill="none" stroke="#8c90a0" stroke-width="1.5"/></svg></div><div class="code"><span class="t">        </span><span class="m">StandardGsonBuilderCustomizer</span><span class="t">(GsonProperties properties)</span><span class="fold"> { </span><span class="k">this</span><span class="t">.</span><span class="f">properties</span><span class="t"> = properties;</span><span class="fold"> }</span></div></div>
<div class="row" style="top:1204px"><div class="ln">52</div><div class="code"></div></div>
<div class="row" style="top:1237px"><div class="ln">53</div><div class="gi" style="left:52px"><svg width="24" height="24" viewBox="0 0 24 24" style="overflow:visible"><path d="M14.5 5.8A7.1 7.1 0 1 0 18.4 15.2" fill="#eef8f0" stroke="#208a3c" stroke-width="1.7"/><path d="M9.2 8.6H13.6M9.2 16.3H13.6M11.4 8.6V16.3" stroke="#208a3c" stroke-width="1.7" fill="none"/><path d="M20.3 13.5V2.6M16.9 5.9L20.3 2.4L23.7 5.9" stroke="#e0374b" stroke-width="1.6" fill="none" stroke-linecap="round"/></svg></div><div class="fm"><svg width="14" height="14" viewBox="0 0 14 14"><path d="M4 2.6L10.4 8L4 13.4" fill="none" stroke="#8c90a0" stroke-width="1.5"/></svg></div><div class="code"><span class="t">        </span><span class="k">public</span><span class="t"> </span><span class="k">int</span><span class="t"> </span><span class="m">getOrder</span><span class="t">()</span><span class="fold"> { </span><span class="k">return</span><span class="t"> </span><span class="n">0</span><span class="t">;</span><span class="fold"> }</span></div></div>
<div class="row" style="top:1270px"><div class="ln">56</div><div class="code"></div></div>
<div class="row" style="top:1303px"><div class="ln">57</div><div class="gi" style="left:52px"><svg width="24" height="24" viewBox="0 0 24 24" style="overflow:visible"><path d="M14.5 5.8A7.1 7.1 0 1 0 18.4 15.2" fill="#eef8f0" stroke="#208a3c" stroke-width="1.7"/><path d="M9.2 8.6H13.6M9.2 16.3H13.6M11.4 8.6V16.3" stroke="#208a3c" stroke-width="1.7" fill="none"/><path d="M20.3 13.5V2.6M16.9 5.9L20.3 2.4L23.7 5.9" stroke="#e0374b" stroke-width="1.6" fill="none" stroke-linecap="round"/></svg></div><div class="fm"><svg width="14" height="14" viewBox="0 0 14 14"><path d="M1.2 4.8L6.8 10.2L12.4 4.8" fill="none" stroke="#a8adbd" stroke-width="1.5"/></svg></div><div class="code"><span class="t">        </span><span class="k">public</span><span class="t"> </span><span class="k">void</span><span class="t"> </span><span class="m">customize</span><span class="t">(GsonBuilder builder) {</span></div></div>
<div class="row" style="top:1336px"><div class="ln">58</div><div class="code"><span class="t">            GsonProperties properties = </span><span class="k">this</span><span class="t">.</span><span class="f">properties</span><span class="t">;</span></div></div>
<div class="row" style="top:1369px"><div class="ln">59</div><div class="code"><span class="t">            PropertyMapper map = PropertyMapper.</span><span class="i">get</span><span class="t">().alwaysApplyingWhenNonNull();</span></div></div>
<div class="row" style="top:1402px"><div class="ln">60</div><div class="code"><span class="t">            Objects.</span><span class="i">requireNonNull</span><span class="t">(properties);</span></div></div>
<div class="row" style="top:1435px"><div class="ln">61</div><div class="code"><span class="t">            PropertyMapper.Source var10000 = map.from(properties::getGenerateNonExecutableJson).whenTrue();</span></div></div>
<div class="row" style="top:1468px"><div class="ln">62</div><div class="code"><span class="t">            Objects.</span><span class="i">requireNonNull</span><span class="t">(builder);</span></div></div>
<div class="abs" style="left:1614px;top:181px;width:2px;height:1302px;background:#ebecf0"></div>
<div class="guide" style="left:219px;top:610px;height:99px"></div>
<div class="guide" style="left:219px;top:973px;height:33px"></div>
<div class="guide" style="left:219px;top:1105px;height:378px"></div>
<div class="guide" style="left:267px;top:1336px;height:147px"></div>
<div class="abs" style="left:146px;top:406px;width:522px;height:47px;border:4px solid #f00f0f"></div>
<svg class="ic" style="left:2465px;top:192px" width="26" height="26" viewBox="0 0 26 26"><path d="M9.07 5.42 L9.84 2.65 A9.6 9.6 0 0 1 14.16 2.65 L14.93 5.42 A7.2 7.2 0 0 1 16.23 6.18 L16.23 6.18 L19.02 5.45 A9.6 9.6 0 0 1 21.18 9.19 L19.16 11.25 A7.2 7.2 0 0 1 19.16 12.75 L19.16 12.75 L21.18 14.81 A9.6 9.6 0 0 1 19.02 18.55 L16.23 17.82 A7.2 7.2 0 0 1 14.93 18.58 L14.93 18.58 L14.16 21.35 A9.6 9.6 0 0 1 9.84 21.35 L9.07 18.58 A7.2 7.2 0 0 1 7.77 17.82 L7.77 17.82 L4.98 18.55 A9.6 9.6 0 0 1 2.82 14.81 L4.84 12.75 A7.2 7.2 0 0 1 4.84 11.25 L4.84 11.25 L2.82 9.19 A9.6 9.6 0 0 1 4.98 5.45 L7.77 6.18 A7.2 7.2 0 0 1 9.07 5.42 Z" fill="none" stroke="#a8adbd" stroke-width="1.5" stroke-linejoin="round"/><circle cx="12" cy="12" r="3.2" fill="none" stroke="#a8adbd" stroke-width="1.5"/><path d="M23.7 20V25.6H18.1Z" fill="#6c707e"/></svg>

<div class="abs" style="left:2478px;top:278px;width:21px;height:3px;background:#c59df0"></div><div class="abs" style="left:2478px;top:354px;width:21px;height:3px;background:#c59df0"></div><div class="abs" style="left:2478px;top:458px;width:21px;height:3px;background:#c59df0"></div><div class="abs" style="left:2478px;top:509px;width:21px;height:3px;background:#c59df0"></div>
<div class="abs" style="left:2484px;top:226px;width:14px;height:488px;background:rgba(0,0,0,0.125);border-right:1px solid rgba(0,0,0,0.12)"></div>
<div class="abs" style="left:174px;top:1468px;width:1893px;height:15px;background:rgba(0,0,0,0.13);border-bottom:2px solid rgba(0,0,0,0.08)"></div>
<div id="status"></div>
<div class="abs" style="left:21px;top:1500px;width:12px;height:12px;border:1.5px solid #3574f0;border-radius:2px;background:#dfe8fc"></div>
<div class="t1" style="left:39px;top:1496.2px;font-size:19.8px;color:#6c707e;">spring-boot-autoconfigure-3.5.5.jar</div>
<svg class="ic" style="left:360px;top:1498px" width="9" height="14" viewBox="0 0 9 14"><path d="M1.5 1.5L7.5 7L1.5 12.5" fill="none" stroke="#8c8f96" stroke-width="1.5"/></svg>
<div class="t1" style="left:384px;top:1496.2px;font-size:19.8px;color:#6c707e;">org</div>
<svg class="ic" style="left:426px;top:1498px" width="9" height="14" viewBox="0 0 9 14"><path d="M1.5 1.5L7.5 7L1.5 12.5" fill="none" stroke="#8c8f96" stroke-width="1.5"/></svg>
<div class="t1" style="left:450px;top:1496.2px;font-size:19.8px;color:#6c707e;">springframework</div>
<svg class="ic" style="left:609px;top:1498px" width="9" height="14" viewBox="0 0 9 14"><path d="M1.5 1.5L7.5 7L1.5 12.5" fill="none" stroke="#8c8f96" stroke-width="1.5"/></svg>
<div class="t1" style="left:634px;top:1496.2px;font-size:19.8px;color:#6c707e;">boot</div>
<svg class="ic" style="left:688px;top:1498px" width="9" height="14" viewBox="0 0 9 14"><path d="M1.5 1.5L7.5 7L1.5 12.5" fill="none" stroke="#8c8f96" stroke-width="1.5"/></svg>
<div class="t1" style="left:711px;top:1496.2px;font-size:19.8px;color:#6c707e;">autoconfigure</div>
<svg class="ic" style="left:846px;top:1498px" width="9" height="14" viewBox="0 0 9 14"><path d="M1.5 1.5L7.5 7L1.5 12.5" fill="none" stroke="#8c8f96" stroke-width="1.5"/></svg>
<div class="t1" style="left:869px;top:1496.2px;font-size:19.8px;color:#6c707e;">gson</div>
<svg class="ic" style="left:924px;top:1498px" width="9" height="14" viewBox="0 0 9 14"><path d="M1.5 1.5L7.5 7L1.5 12.5" fill="none" stroke="#8c8f96" stroke-width="1.5"/></svg>
<svg class="ic" style="left:947px;top:1494px" width="23" height="23" viewBox="0 0 23 23"><circle cx="11.5" cy="11.5" r="10" fill="#e6eefd" stroke="#3574f0" stroke-width="1.5"/><path d="M15 8Q13.8 6.6 11.8 6.6Q7.3 6.6 7.3 11.5Q7.3 16.4 11.8 16.4Q13.8 16.4 15 15" fill="none" stroke="#3574f0" stroke-width="1.5"/></svg>
<div class="t1" style="left:977px;top:1496.5px;font-size:19.5px;color:#6c707e;">GsonAutoConfiguration</div>
<svg class="ic" style="left:1191px;top:1498px" width="9" height="14" viewBox="0 0 9 14"><path d="M1.5 1.5L7.5 7L1.5 12.5" fill="none" stroke="#8c8f96" stroke-width="1.5"/></svg>
<svg class="ic" style="left:1217px;top:1494px" width="23" height="23" viewBox="0 0 23 23"><circle cx="11.5" cy="11.5" r="10" fill="#fdecee" stroke="#e55765" stroke-width="1.5"/><path d="M6.5 16V8.5M6.5 10Q6.5 8 8.5 8Q11.3 8 11.3 10.5V16M11.3 10.5Q11.3 8 13.9 8Q16.5 8 16.5 10.5V16" fill="none" stroke="#e55765" stroke-width="1.5"/></svg>
<div class="t1" style="left:1247px;top:1496.2px;font-size:19.8px;color:#6c707e;">gson</div>
<div class="t1" style="left:2217px;top:1497.1px;font-size:18.8px;color:#6c707e;">35:10</div>
<div class="t1" style="left:2289px;top:1499.4px;font-size:16.1px;color:#6c707e;transform:scaleY(1.2);transform-origin:0 80%">CRLF</div>
<div class="t1" style="left:2357px;top:1497.8px;font-size:18px;color:#6c707e;">UTF-8</div>
<svg class="ic" style="left:2430px;top:1490px" width="40" height="32" viewBox="0 0 40 32"><path d="M14 25.9H11.2Q8.2 25.9 8.2 22.9V11.4L13.5 6.5H18.5Q21.5 6.5 21.5 9.5V14M8.2 11.4H11.5Q14 11.4 14 9V6.5" fill="none" stroke="#6c707e" stroke-width="1.6" stroke-linejoin="round"/><path d="M19.07 18.36 L19.38 16.51 A5.5 5.5 0 0 1 22.42 16.51 L22.73 18.36 A3.9 3.9 0 0 1 22.97 18.49 L22.97 18.49 L24.72 17.84 A5.5 5.5 0 0 1 26.24 20.47 L24.80 21.66 A3.9 3.9 0 0 1 24.80 21.94 L24.80 21.94 L26.24 23.13 A5.5 5.5 0 0 1 24.72 25.76 L22.97 25.11 A3.9 3.9 0 0 1 22.73 25.24 L22.73 25.24 L22.42 27.09 A5.5 5.5 0 0 1 19.38 27.09 L19.07 25.24 A3.9 3.9 0 0 1 18.83 25.11 L18.83 25.11 L17.08 25.76 A5.5 5.5 0 0 1 15.56 23.13 L17.00 21.94 A3.9 3.9 0 0 1 17.00 21.66 L17.00 21.66 L15.56 20.47 A5.5 5.5 0 0 1 17.08 17.84 L18.83 18.49 A3.9 3.9 0 0 1 19.07 18.36 Z" fill="#e9eaee" stroke="#6c707e" stroke-width="1.6" stroke-linejoin="round"/><circle cx="20.9" cy="21.8" r="1.1" fill="#6c707e"/></svg>
<div class="t1" style="left:2462px;top:1496.5px;font-size:19.5px;color:#6c707e;">4 <span style="display:inline-block;width:19.5px;text-align:center">个</span><span style="display:inline-block;width:19.5px;text-align:center">空</span><span style="display:inline-block;width:19.5px;text-align:center">格</span></div>

</body></html>
